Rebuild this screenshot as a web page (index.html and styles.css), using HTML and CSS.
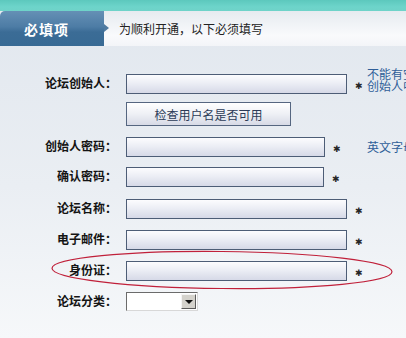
FILE: index.html
```html
<!DOCTYPE html>
<html lang="zh-CN">
<head>
<meta charset="utf-8">
<title>必填项</title>
<link rel="stylesheet" href="styles.css">
</head>
<body>
<div class="topband"></div>
<div class="header">
  <div class="tab">必填项</div>
  <div class="arrow"></div>
  <div class="intro">为顺利开通，以下必须填写</div>
</div>
<div class="form">
  <div class="row">
    <label class="lbl">论坛创始人：</label>
    <div class="field"><div class="input w221"></div><span class="star">✱</span></div>
    <div class="note two"><div>不能有空格</div><div>创始人中文</div></div>
  </div>
  <div class="row btnrow">
    <div class="lbl"></div>
    <div class="field"><div class="btn">检查用户名是否可用</div></div>
  </div>
  <div class="row r3">
    <label class="lbl">创始人密码：</label>
    <div class="field"><div class="input w199"></div><span class="star">✱</span></div>
    <div class="note">英文字母</div>
  </div>
  <div class="row r4">
    <label class="lbl">确认密码：</label>
    <div class="field"><div class="input w198"></div><span class="star">✱</span></div>
  </div>
  <div class="row r5">
    <label class="lbl">论坛名称：</label>
    <div class="field"><div class="input w221"></div><span class="star">✱</span></div>
  </div>
  <div class="row r6">
    <label class="lbl">电子邮件：</label>
    <div class="field"><div class="input w221"></div><span class="star">✱</span></div>
  </div>
  <div class="row r7 marked">
    <label class="lbl">身份证：</label>
    <div class="field"><div class="input w221"></div><span class="star">✱</span></div>
    <svg class="ring" width="346" height="41" viewBox="0 0 346 41">
      <ellipse cx="172" cy="20" rx="170" ry="18.5" fill="none" stroke="#c0203a" stroke-width="1.2" transform="rotate(0.6 172 20)"/>
    </svg>
  </div>
  <div class="row r8">
    <label class="lbl">论坛分类：</label>
    <div class="field">
      <div class="select"><span class="sel-text"></span><span class="sel-btn"><span class="tri"></span></span></div>
    </div>
  </div>
</div>
</body>
</html>
```
FILE: styles.css
```css
html, body {
  margin: 0;
  padding: 0;
  overflow: hidden;
}
body {
  width: 406px;
  height: 338px;
  font-family: "Noto Sans CJK SC", "DejaVu Sans", sans-serif;
  font-size: 12px;
  color: #1e1e1e;
  background: linear-gradient(to bottom, #e1e7ee 0%, #eaeef3 55%, #f6f8fa 100%);
}
.topband {
  height: 11px;
  background: linear-gradient(to bottom, #5cc8bd, #6dd4ca 60%, #6fd3c9);
}
.header {
  height: 35px;
  display: flex;
  align-items: center;
  background: linear-gradient(to bottom, #e6ebf0, #f9fafc 70%, #f3f5f8);
}
.tab {
  width: 104px;
  height: 35px;
  box-sizing: border-box;
  padding-left: 24px;
  display: flex;
  align-items: center;
  color: #ffffff;
  font-size: 14px;
  font-weight: bold;
  letter-spacing: 1px;
  border-top-left-radius: 5px;
  background: linear-gradient(to bottom, #6590b5 0%, #4d7ca5 45%, #3b6c96 60%, #386a94 100%);
}
.arrow {
  width: 0;
  height: 0;
  border-top: 4px solid transparent;
  border-bottom: 4px solid transparent;
  border-left: 5px solid #4f7aa0;
  margin-top: -2px;
}
.intro {
  margin-left: 10px;
  font-size: 12px;
  color: #222;
}
.form {
  padding-top: 28px;
}
.row {
  display: grid;
  grid-template-columns: 126px 241px auto;
  height: 20px;
  align-items: center;
  margin-bottom: 8px;
}
.btnrow { height: 24px; margin-bottom: 11px; }
.r3 { margin-bottom: 10px; }
.r4 { margin-bottom: 12px; }
.r5, .r6, .r7 { margin-bottom: 11px; }
.r8 { height: 19px; }
.lbl {
  text-align: right;
  padding-right: 9px;
  font-weight: bold;
  font-size: 12px;
  line-height: 14px;
  color: #141414;
  white-space: nowrap;
  margin-top: -2px;
}
.field {
  display: flex;
  align-items: center;
  height: 100%;
}
.input {
  height: 20px;
  box-sizing: border-box;
  border: 1px solid #4d5d76;
  background: linear-gradient(to bottom, #fcfcfe 0%, #eceef5 45%, #d6d9e7 100%);
}
.w221 { width: 221px; }
.w199 { width: 199px; }
.w198 { width: 198px; }
.star {
  margin-left: 8px;
  margin-top: 4px;
  font-family: "DejaVu Sans", sans-serif;
  font-size: 9px;
  font-weight: bold;
  line-height: 9px;
  color: #262626;
}
.note {
  font-size: 12px;
  line-height: 12px;
  color: #2f5e98;
  white-space: nowrap;
}
.note.two {
  align-self: start;
  margin-top: -6px;
  display: flex;
  flex-direction: column;
}
.note.two div {
  height: 12px;
  line-height: 12px;
  overflow: hidden;
}
.btn {
  width: 165px;
  height: 24px;
  box-sizing: border-box;
  border: 1px solid #556680;
  display: flex;
  align-items: center;
  justify-content: center;
  font-size: 12px;
  color: #2c3b57;
  background: linear-gradient(to bottom, #ffffff 0%, #eef0f5 50%, #d7dae6 100%);
}
.marked {
  position: relative;
}
.ring {
  position: absolute;
  left: 50px;
  top: -11px;
  pointer-events: none;
}
.select {
  width: 72px;
  height: 19px;
  box-sizing: border-box;
  display: flex;
  border-top: 1px solid #6b6b6b;
  border-left: 1px solid #6b6b6b;
  border-right: 1px solid #d8d8d8;
  border-bottom: 1px solid #d8d8d8;
  background: #ffffff;
}
.sel-text { flex: 1; }
.sel-btn {
  width: 15px;
  height: 15px;
  margin: 1px;
  box-sizing: border-box;
  display: flex;
  align-items: center;
  justify-content: center;
  background: #d4d2cc;
  border-top: 1px solid #f4f4f4;
  border-left: 1px solid #f4f4f4;
  border-right: 1px solid #5a5a5a;
  border-bottom: 1px solid #5a5a5a;
}
.tri {
  width: 0;
  height: 0;
  border-left: 4px solid transparent;
  border-right: 4px solid transparent;
  border-top: 4px solid #111;
}
```
